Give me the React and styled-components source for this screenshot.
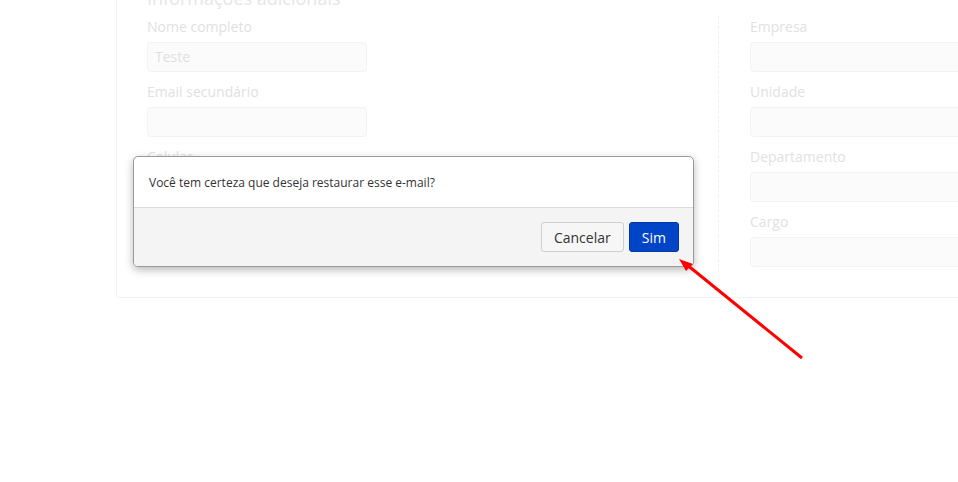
import React from 'react';
import styled, { createGlobalStyle } from 'styled-components';

const GlobalStyle = createGlobalStyle`
    html, body {
        margin: 0;
        padding: 0;
        background: #ffffff;
        font-family: "Open Sans", "Liberation Sans", sans-serif;
        overflow: hidden;
    }
    * { box-sizing: border-box; }
`;

const Page = styled.div`
    position: relative;
    width: 958px;
    height: 482px;
    overflow: hidden;
`;

const Card = styled.section`
    margin: -30px 0 0 116px;
    width: 900px;
    border: 1px solid #f3f3f3;
    border-radius: 4px;
    padding: 15px 0 20px 30px;
`;

const Title = styled.h3`
    margin: 0 0 6px;
    font-size: 18px;
    line-height: 24px;
    font-weight: 400;
    color: #e6e6e6;
`;

const Columns = styled.div`
    display: grid;
    grid-template-columns: 571px 1fr;
`;

const Column = styled.div`
    padding: 1px 0 10px ${({ divided }) => (divided ? '31px' : '0')};
    border-left: ${({ divided }) => (divided ? '1px dashed #f0f0f0' : 'none')};
`;

const Field = styled.div`
    display: flex;
    flex-direction: column;
    gap: 5px;
    & + & { margin-top: 10px; }
`;

const Label = styled.label`
    font-size: 14px;
    line-height: 20px;
    color: #e3dfdf;
`;

const Input = styled.div`
    width: ${({ wide }) => (wide ? '300px' : '220px')};
    height: 30px;
    border: 1px solid #f3f3f3;
    border-radius: 4px;
    background: #fbfbfb;
    padding: 0 7px;
    font-size: 14px;
    line-height: 28px;
    color: #e0e0e0;
`;

const Modal = styled.div`
    position: absolute;
    left: 133px;
    top: 156px;
    width: 561px;
    border: 1px solid #9a9a9a;
    border-radius: 5px;
    background: #ffffff;
    box-shadow: 0 3px 8px rgba(0, 0, 0, 0.28);
    overflow: hidden;
`;

const ModalBody = styled.div`
    height: 51px;
    padding: 0 15px;
    display: flex;
    align-items: center;
    font-size: 12px;
    color: #333;
    border-bottom: 1px solid #dcdcdc;
`;

const ModalFooter = styled.div`
    display: flex;
    justify-content: flex-end;
    gap: 5px;
    padding: 14px 14px 14px;
    background: #f4f4f4;
`;

const Button = styled.button`
    height: 30px;
    padding: 0 12px;
    min-width: ${({ primary }) => (primary ? '50px' : '83px')};
    border-radius: 3px;
    font-family: inherit;
    font-size: 14px;
    cursor: pointer;
    border: 1px solid ${({ primary }) => (primary ? '#0039a6' : '#cfcfcf')};
    background: ${({ primary }) => (primary ? '#0045c7' : '#f6f6f6')};
    color: ${({ primary }) => (primary ? '#ffffff' : '#333333')};
`;

const Arrow = styled.svg`
    position: absolute;
    left: 0;
    top: 0;
    pointer-events: none;
`;

const leftFields = [
    { label: 'Nome completo', value: 'Teste' },
    { label: 'Email secundário', value: '' },
    { label: 'Celular', value: '' },
    { label: 'Telefone', value: '' },
];

const rightFields = ['Empresa', 'Unidade', 'Departamento', 'Cargo'];

const App = () => {
    return (
        <Page>
            <GlobalStyle />
            <Card>
                <Title>Informações adicionais</Title>
                <Columns>
                    <Column>
                        {leftFields.map((f) => (
                            <Field key={f.label}>
                                <Label>{f.label}</Label>
                                <Input>{f.value}</Input>
                            </Field>
                        ))}
                    </Column>
                    <Column divided>
                        {rightFields.map((f) => (
                            <Field key={f}>
                                <Label>{f}</Label>
                                <Input wide />
                            </Field>
                        ))}
                    </Column>
                </Columns>
            </Card>

            <Modal>
                <ModalBody>Você tem certeza que deseja restaurar esse e-mail?</ModalBody>
                <ModalFooter>
                    <Button>Cancelar</Button>
                    <Button primary>Sim</Button>
                </ModalFooter>
            </Modal>

            <Arrow width="958" height="482" viewBox="0 0 958 482">
                <line x1="802" y1="358" x2="686" y2="264" stroke="#ff0000" strokeWidth="3" />
                <polygon points="679,259 693,264 686,271" fill="#ff0000" />
            </Arrow>
        </Page>
    );
};

export default App;
